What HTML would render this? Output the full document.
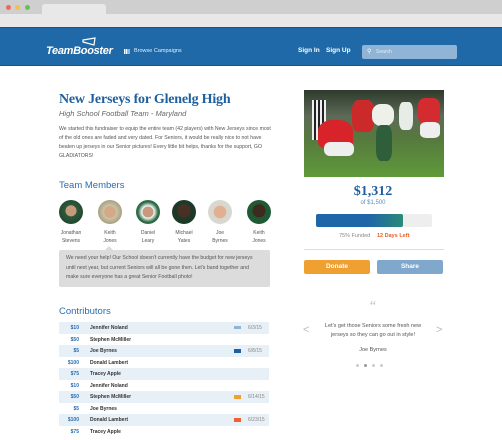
<!DOCTYPE html>
<html><head><meta charset="utf-8"><style>
*{margin:0;padding:0;box-sizing:border-box}
body{width:502px;height:440px;overflow:hidden;background:#fff;font-family:"Liberation Sans",sans-serif;position:relative}
.a{position:absolute}
.dot{position:absolute;top:5px;width:5px;height:5px;border-radius:50%}
.row{position:absolute;left:59px;width:210px;height:11.5px;font-size:5px;color:#333;font-weight:bold}
.row.s{background:#e8f0f7}
.row span{position:absolute;top:3px}
.amt{right:190px;color:#2a6db0;text-align:right}
.av{position:absolute;top:200px;width:24px;height:24px;border-radius:50%;background:radial-gradient(circle at 50% 45%,#c99a7a 0 30%,#2d5a3a 32%,#1d3a28 100%)}
.nm{position:absolute;top:229px;width:40px;text-align:center;font-size:5px;line-height:8px;color:#555}
</style></head><body>
<div class="a" style="left:0;top:0;width:502px;height:14px;background:#cfcfcf"></div>
<div class="dot" style="left:6px;background:#ec6a5e"></div>
<div class="dot" style="left:15px;background:#f4bf4f"></div>
<div class="dot" style="left:25px;background:#61c554"></div>
<div class="a" style="left:42px;top:4px;width:64px;height:10px;background:#e8e8e8;border-radius:3px 3px 0 0"></div>
<div class="a" style="left:0;top:14px;width:502px;height:13px;background:#e8e8e8"></div>
<div class="a" style="left:0;top:27px;width:502px;height:39px;background:#1f69a8;border-top:1px solid #17558c;border-bottom:1px solid #17558c"></div>
<svg class="a" style="left:82px;top:37px" width="16" height="9"><path d="M1 3 L13 1 L12 8 L1 5 Z" fill="none" stroke="#fff" stroke-width="1.2"/></svg>
<div class="a" style="left:46px;top:45px;font-size:11px;font-style:italic;font-weight:bold;color:#fff;letter-spacing:-0.3px">TeamBooster</div>
<div class="a" style="left:124px;top:49px;width:6px;height:5px;background:repeating-linear-gradient(90deg,#fff 0 1.3px,transparent 1.3px 2.2px)"></div>
<div class="a" style="left:134px;top:48px;font-size:5.5px;color:#e8eef5">Browse Campaigns</div>
<div class="a" style="left:298px;top:47px;font-size:6.5px;color:#fff;font-weight:bold">Sign In</div>
<div class="a" style="left:326px;top:47px;font-size:6.5px;color:#fff;font-weight:bold">Sign Up</div>
<div class="a" style="left:362px;top:45px;width:95px;height:14px;background:#8fb4d6;border-radius:2px"></div>
<div class="a" style="left:367px;top:48px;font-size:6px;color:#fff">&#9906;</div>
<div class="a" style="left:376px;top:49px;font-size:5px;color:#e5eef7">Search</div>

<div class="a" style="left:59px;top:92px;font-family:'Liberation Serif',serif;font-size:14px;font-weight:bold;color:#1e5f9f;white-space:nowrap;letter-spacing:-0.2px">New Jerseys for Glenelg High</div>
<div class="a" style="left:59px;top:109px;font-size:7.5px;font-style:italic;color:#666">High School Football Team - Maryland</div>
<div class="a" style="left:59px;top:125px;width:215px;font-size:5.2px;line-height:9px;color:#555">We started this fundraiser to equip the entire team (42 players) with New Jerseys since most of the old ones are faded and very dated. For Seniors, it would be really nice to not have beaten up jerseys in our Senior pictures! Every little bit helps, thanks for the support, GO GLADIATORS!</div>

<div class="a" style="left:59px;top:180px;font-size:9.5px;color:#2a6db0">Team Members</div>
<div class="av" style="left:59px"></div><div class="av" style="left:98px;background:radial-gradient(circle at 50% 50%,#d4a98a 0 34%,#cdc5a8 36%,#8a8060 100%)"></div>
<div class="av" style="left:136px;background:radial-gradient(circle at 50% 50%,#c79a80 0 32%,#fff 34%,#2d6a45 60%)"></div>
<div class="av" style="left:172px;background:radial-gradient(circle at 50% 45%,#4a3024 0 36%,#1d3a28 38%)"></div>
<div class="av" style="left:208px;background:radial-gradient(circle at 50% 50%,#e0b090 0 36%,#d8d8d0 38%)"></div>
<div class="av" style="left:247px;background:radial-gradient(circle at 50% 45%,#3e2a1e 0 36%,#1f5a35 38%)"></div>
<div class="nm" style="left:51px">Jonathan<br>Stevens</div>
<div class="nm" style="left:90px">Keith<br>Jones</div>
<div class="nm" style="left:128px">Daniel<br>Leary</div>
<div class="nm" style="left:164px">Michael<br>Yates</div>
<div class="nm" style="left:200px">Joe<br>Byrnes</div>
<div class="nm" style="left:239px">Keith<br>Jones</div>
<div class="a" style="left:105px;top:246px;width:0;height:0;border-left:4px solid transparent;border-right:4px solid transparent;border-bottom:4px solid #dcdcdc"></div>
<div class="a" style="left:59px;top:250px;width:211px;height:37px;background:#dcdcdc;border-radius:2px;padding:4px 7px;font-size:5.2px;line-height:9.5px;color:#555">We need your help! Our School doesn't currently have the budget for new jerseys until next year, but current Seniors will all be gone then. Let's band together and make sure everyone has a great Senior Football photo!</div>

<div class="a" style="left:59px;top:306px;font-size:9.5px;color:#2a6db0">Contributors</div>
<div class="row s" style="top:322px"><span class="amt">$10</span><span style="left:31px">Jennifer Noland</span><span style="left:175px;top:4px;width:7px;height:3px;background:#8fb4d6"></span><span style="left:189px;color:#888;font-weight:normal">6/3/15</span></div>
<div class="row" style="top:333.5px"><span class="amt">$50</span><span style="left:31px">Stephen McMiller</span></div>
<div class="row s" style="top:345px"><span class="amt">$5</span><span style="left:31px">Joe Byrnes</span><span style="left:175px;top:4px;width:7px;height:4px;background:#1f5fa8"></span><span style="left:189px;color:#888;font-weight:normal">6/8/15</span></div>
<div class="row" style="top:356.5px"><span class="amt">$100</span><span style="left:31px">Donald Lambert</span></div>
<div class="row s" style="top:368px"><span class="amt">$75</span><span style="left:31px">Tracey Apple</span></div>
<div class="row" style="top:379.5px"><span class="amt">$10</span><span style="left:31px">Jennifer Noland</span></div>
<div class="row s" style="top:391px"><span class="amt">$50</span><span style="left:31px">Stephen McMiller</span><span style="left:175px;top:4px;width:7px;height:4px;background:#f0a030"></span><span style="left:189px;color:#888;font-weight:normal">6/14/15</span></div>
<div class="row" style="top:402.5px"><span class="amt">$5</span><span style="left:31px">Joe Byrnes</span></div>
<div class="row s" style="top:414px"><span class="amt">$100</span><span style="left:31px">Donald Lambert</span><span style="left:175px;top:4px;width:7px;height:4px;background:#f06030"></span><span style="left:189px;color:#888;font-weight:normal">6/23/15</span></div>
<div class="row" style="top:425.5px"><span class="amt">$75</span><span style="left:31px">Tracey Apple</span></div>

<div class="a" style="left:304px;top:90px;width:140px;height:87px;background:linear-gradient(180deg,#2e3a2a 0%,#5d6a58 30%,#56783e 55%,#5f9a3a 100%);overflow:hidden">
 <div class="a" style="left:8px;top:10px;width:14px;height:40px;background:repeating-linear-gradient(90deg,#eee 0 2px,#222 2px 4px)"></div>
 <div class="a" style="left:14px;top:30px;width:35px;height:28px;background:#d8232a;border-radius:40% 40% 20% 20%"></div>
 <div class="a" style="left:20px;top:52px;width:30px;height:14px;background:#eee;border-radius:6px"></div>
 <div class="a" style="left:48px;top:10px;width:22px;height:32px;background:#cc2a2a;border-radius:30%"></div>
 <div class="a" style="left:68px;top:14px;width:22px;height:22px;background:#eef0ea;border-radius:40%"></div>
 <div class="a" style="left:72px;top:35px;width:16px;height:36px;background:#2f5e3a;border-radius:30%"></div>
 <div class="a" style="left:95px;top:12px;width:14px;height:28px;background:#e8ece6;border-radius:30%"></div>
 <div class="a" style="left:114px;top:8px;width:22px;height:26px;background:#d42b30;border-radius:30%"></div>
 <div class="a" style="left:116px;top:32px;width:20px;height:16px;background:#eee;border-radius:30%"></div>
</div>
<div class="a" style="left:303px;top:184px;width:140px;text-align:center;font-family:'Liberation Serif',serif;font-size:14px;font-weight:bold;color:#1e5f9f">$1,312</div>
<div class="a" style="left:303px;top:200px;width:140px;text-align:center;font-size:6px;color:#5a8cc0">of $1,500</div>
<div class="a" style="left:316px;top:214px;width:116px;height:13px;background:#eee;border-radius:2px"></div>
<div class="a" style="left:316px;top:214px;width:87px;height:13px;background:linear-gradient(90deg,#1f66a8 60%,#2a8a78);border-radius:2px"></div>
<div class="a" style="left:339px;top:233px;font-size:5.5px;color:#888">75% Funded</div>
<div class="a" style="left:377px;top:233px;font-size:5.5px;color:#f05a28;font-weight:bold">12 Days Left</div>
<div class="a" style="left:304px;top:249px;width:140px;height:1px;background:#ddd"></div>
<div class="a" style="left:304px;top:260px;width:66px;height:14px;background:#f0a030;border-radius:2px;color:#fff;font-size:6.5px;font-weight:bold;text-align:center;line-height:14px">Donate</div>
<div class="a" style="left:377px;top:260px;width:66px;height:14px;background:#7fa8cc;border-radius:2px;color:#fff;font-size:6.5px;font-weight:bold;text-align:center;line-height:14px">Share</div>
<div class="a" style="left:303px;top:299px;width:140px;text-align:center;font-size:14px;color:#bbb;font-family:'Liberation Serif',serif">&ldquo;</div>
<div class="a" style="left:303px;top:322px;width:140px;text-align:center;font-size:5.5px;line-height:9px;color:#555">Let's get those Seniors some fresh new<br>jerseys so they can go out in style!</div>
<div class="a" style="left:303px;top:347px;width:140px;text-align:center;font-size:5.5px;color:#555">Joe Byrnes</div>
<div class="a" style="left:303px;top:324px;font-size:11px;color:#bbb">&lt;</div>
<div class="a" style="left:436px;top:324px;font-size:11px;color:#bbb">&gt;</div>
<div class="a" style="left:356px;top:364px;width:3px;height:3px;border-radius:50%;background:#ccc"></div>
<div class="a" style="left:364px;top:364px;width:3px;height:3px;border-radius:50%;background:#999"></div>
<div class="a" style="left:372px;top:364px;width:3px;height:3px;border-radius:50%;background:#ccc"></div>
<div class="a" style="left:380px;top:364px;width:3px;height:3px;border-radius:50%;background:#ccc"></div>
</body></html>
